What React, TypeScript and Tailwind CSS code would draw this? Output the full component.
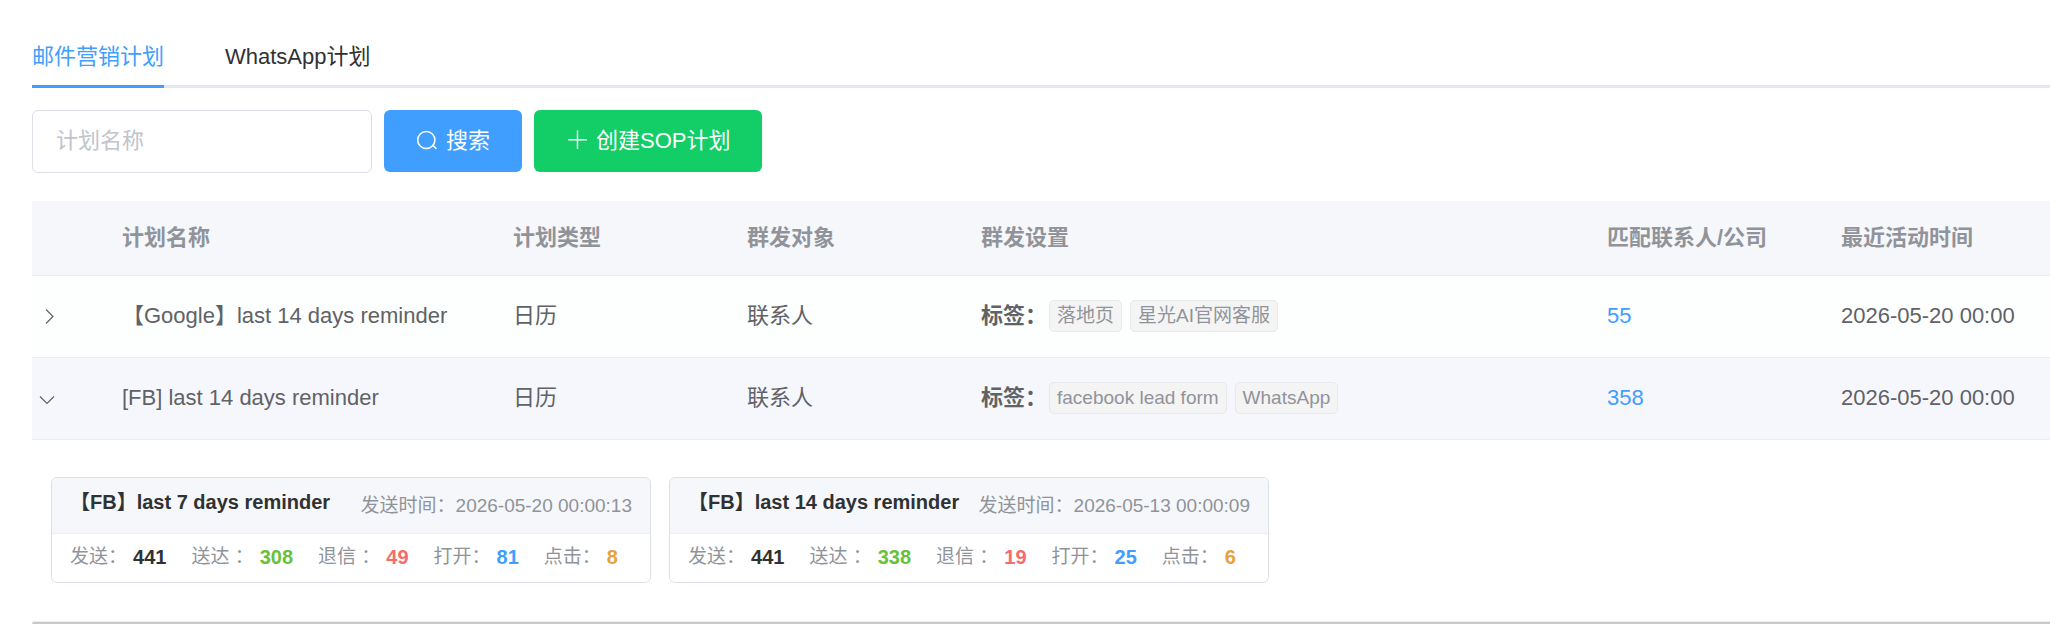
type Plan = {
  name: string;
  type: string;
  target: string;
  tags: string[];
  matches: number;
  lastActive: string;
  expanded: boolean;
};

type Send = {
  title: string;
  time: string;
  stats: { label: string; value: number; color: string }[];
};

const plans: Plan[] = [
  {
    name: "【Google】last 14 days reminder",
    type: "日历",
    target: "联系人",
    tags: ["落地页", "星光AI官网客服"],
    matches: 55,
    lastActive: "2026-05-20 00:00",
    expanded: false,
  },
  {
    name: "[FB] last 14 days reminder",
    type: "日历",
    target: "联系人",
    tags: ["facebook lead form", "WhatsApp"],
    matches: 358,
    lastActive: "2026-05-20 00:00",
    expanded: true,
  },
];

const sends: Send[] = [
  {
    title: "【FB】last 7 days reminder",
    time: "2026-05-20 00:00:13",
    stats: [
      { label: "发送：", value: 441, color: "text-[#303133]" },
      { label: "送达 ：", value: 308, color: "text-[#67c23a]" },
      { label: "退信 ：", value: 49, color: "text-[#f56c6c]" },
      { label: "打开：", value: 81, color: "text-[#409eff]" },
      { label: "点击：", value: 8, color: "text-[#e6a23c]" },
    ],
  },
  {
    title: "【FB】last 14 days reminder",
    time: "2026-05-13 00:00:09",
    stats: [
      { label: "发送：", value: 441, color: "text-[#303133]" },
      { label: "送达 ：", value: 338, color: "text-[#67c23a]" },
      { label: "退信 ：", value: 19, color: "text-[#f56c6c]" },
      { label: "打开：", value: 25, color: "text-[#409eff]" },
      { label: "点击：", value: 6, color: "text-[#e6a23c]" },
    ],
  },
];

function SearchIcon() {
  return (
    <svg className="size-[22px]" viewBox="0 0 22 22" fill="none" stroke="currentColor" strokeWidth="1.5" aria-hidden="true">
      <circle cx="10.3" cy="10" r="8.6" />
      <path d="M16.4 15l4 3.8" />
    </svg>
  );
}

function PlusIcon() {
  return (
    <svg className="size-[22px]" viewBox="0 0 22 22" fill="none" stroke="currentColor" strokeWidth="1.4" aria-hidden="true">
      <path d="M11.5 0.5v18.6M2.2 9.8h18.6" />
    </svg>
  );
}

function ChevronIcon({ open }: { open: boolean }) {
  return (
    <svg className="size-5" viewBox="0 0 20 20" fill="none" stroke="currentColor" strokeWidth="1.2" aria-hidden="true">
      <path d={open ? "M2 8.5l7 7 7-7" : "M8 3.5l7 7-7 7"} />
    </svg>
  );
}

const head = "border-b border-[#ebeef5] bg-[#f5f7fb] px-[15px] text-left font-bold text-[#909399]";
const cell = "border-b border-[#ebeef5] px-[15px] pb-0.5";

function PlanRow({ plan }: { plan: Plan }) {
  return (
    <tr className={plan.expanded ? "h-[82px] bg-[#f6f7fc]" : "h-[82px] bg-[#fdfefe]"}>
      <td className="border-b border-[#ebeef5] pb-0.5 pl-1.5">
        <button type="button" aria-label={plan.expanded ? "收起" : "展开"} className="flex text-[#606266]">
          <ChevronIcon open={plan.expanded} />
        </button>
      </td>
      <td className={cell}>{plan.name}</td>
      <td className={cell}>{plan.type}</td>
      <td className={cell}>{plan.target}</td>
      <td className={cell}>
        <div className="flex items-center gap-0.5">
          <b>标签：</b>
          <div className="flex gap-2">
            {plan.tags.map((tag) => (
              <span
                key={tag}
                className="flex h-8 items-center rounded-[5px] border border-[#e9e9eb] bg-[#f4f4f5] px-[7px] text-[19px] text-[#909399]"
              >
                {tag}
              </span>
            ))}
          </div>
        </div>
      </td>
      <td className={cell}>
        <a href="#contacts" className="text-[#409eff]">
          {plan.matches}
        </a>
      </td>
      <td className={cell}>{plan.lastActive}</td>
    </tr>
  );
}

function SendCard({ send }: { send: Send }) {
  return (
    <article className="w-[600px] overflow-hidden rounded-md border border-[#dcdfe6] bg-white">
      <header className="flex h-14 items-center justify-between border-b border-[#ebeef5] bg-[#f5f7fb] px-[18px]">
        <h3 className="pb-2 text-[20px] font-bold text-[#303133]">{send.title}</h3>
        <span className="text-[19px] text-[#909399]">发送时间：{send.time}</span>
      </header>
      <dl className="flex h-12 items-center gap-[25px] px-[18px] pb-0.5">
        {send.stats.map((s) => (
          <div key={s.label} className="flex items-center gap-1.5">
            <dt className="text-[19px] text-[#909399]">{s.label}</dt>
            <dd className={`text-[20px] font-bold ${s.color}`}>{s.value}</dd>
          </div>
        ))}
      </dl>
    </article>
  );
}

export default function App() {
  return (
    <main className="overflow-hidden bg-white pl-8 pt-7 font-['Liberation_Sans','Noto_Sans_CJK_SC',sans-serif] text-[22px] leading-[30px] text-[#606266]">
      <nav className="flex gap-[61px] text-[#303133] shadow-[inset_0_-3px_0_#e4e7ed]">
        <a href="#email" aria-current="page" className="flex h-[60px] items-center border-b-[3px] border-[#409eff] text-[#409eff]">
          邮件营销计划
        </a>
        <a href="#whatsapp" className="flex h-[60px] items-center border-b-[3px] border-transparent">
          WhatsApp计划
        </a>
      </nav>

      <form className="mt-[22px] flex gap-3" onSubmit={(e) => e.preventDefault()}>
        <input
          type="text"
          aria-label="计划名称"
          placeholder="计划名称"
          className="h-[63px] w-[340px] rounded-md border border-[#dcdfe6] px-[23px] pb-0.5 outline-none placeholder:text-[#c0c4cc]"
        />
        <button type="submit" className="flex h-[62px] items-center gap-2 rounded-md bg-[#409eff] px-8 text-white">
          <SearchIcon />
          搜索
        </button>
        <button type="button" className="flex h-[62px] items-center gap-2 rounded-md bg-[#13ce66] px-8 text-white">
          <PlusIcon />
          创建SOP计划
        </button>
      </form>

      <table className="mt-7 w-full table-fixed border-separate border-spacing-0">
        <colgroup>
          <col className="w-[75px]" />
          <col className="w-[391px]" />
          <col className="w-[234px]" />
          <col className="w-[234px]" />
          <col />
          <col className="w-[234px]" />
          <col className="w-[224px]" />
        </colgroup>
        <thead>
          <tr className="h-[75px]">
            <th className={head} aria-label="展开" />
            <th className={head}>计划名称</th>
            <th className={head}>计划类型</th>
            <th className={head}>群发对象</th>
            <th className={head}>群发设置</th>
            <th className={head}>匹配联系人/公司</th>
            <th className={head}>最近活动时间</th>
          </tr>
        </thead>
        <tbody>
          {plans.map((plan) => (
            <PlanRow key={plan.name} plan={plan} />
          ))}
          <tr>
            <td colSpan={7} className="border-b border-[#ebeef5] px-[19px] pb-[38px] pt-[37px]">
              <div className="flex gap-[18px]">
                {sends.map((send) => (
                  <SendCard key={send.title} send={send} />
                ))}
              </div>
            </td>
          </tr>
        </tbody>
      </table>
      <div className="h-0.5 rounded-tl-sm bg-[#c8c9cc]" />
    </main>
  );
}
